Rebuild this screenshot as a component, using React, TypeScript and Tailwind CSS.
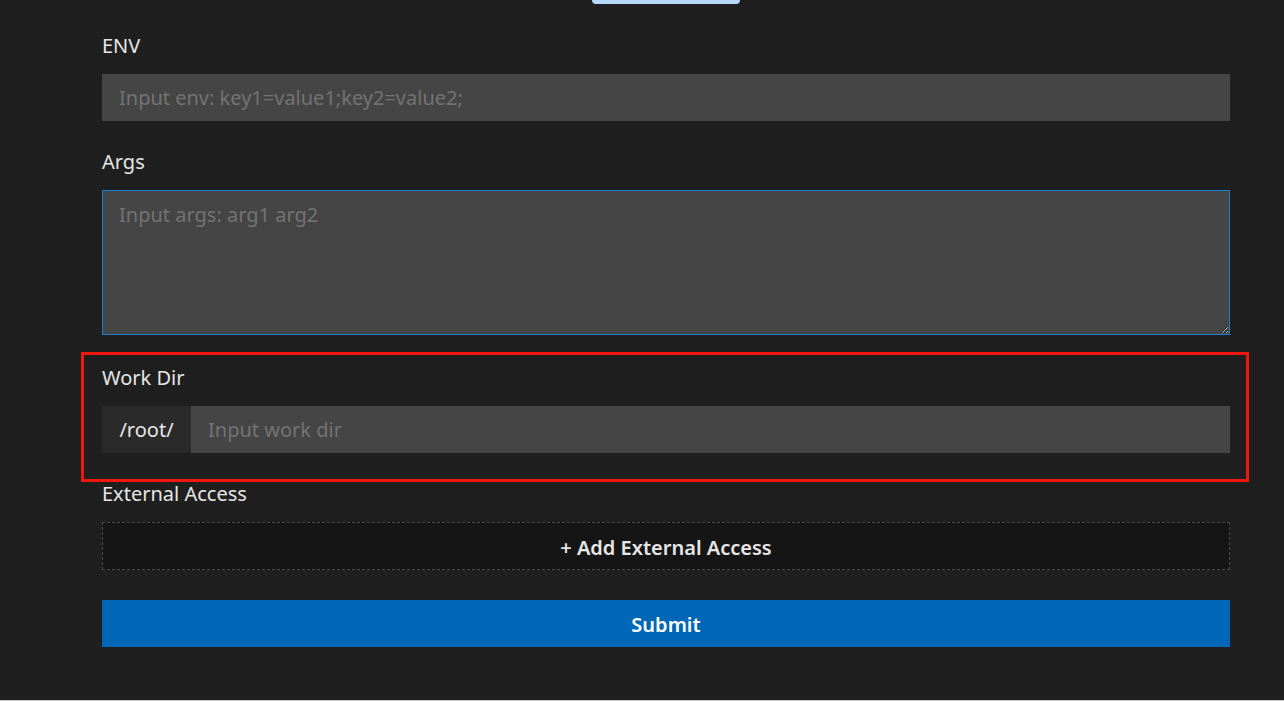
import { useState } from 'react'

const labelClass = 'block h-7 text-[20px] leading-7 text-[#e6e6e6]'
const fieldClass = 'h-[47px] w-full bg-[#454545] px-[17px] text-[20px] text-[#e6e6e6] placeholder:text-[#737373] outline-none'

export default function App() {
  const [env, setEnv] = useState('')
  const [args, setArgs] = useState('')
  const [workDir, setWorkDir] = useState('')

  return (
    <div className="relative h-[701px] w-full overflow-hidden bg-[#1f1f1f] font-['Noto_Sans','Open_Sans',sans-serif]">
      {/* bottom of the tab button scrolled out of view */}
      <div className="ml-[592px] h-[4px] w-[148px] rounded-b-[6px] bg-[#b7dafc]" />

      <form className="ml-[102px] flex w-[1128px] flex-col pt-[28px]" onSubmit={e => e.preventDefault()}>
        <label className={labelClass}>ENV</label>
        <input
          className={`mt-[14px] ${fieldClass}`}
          placeholder="Input env: key1=value1;key2=value2;"
          value={env}
          onChange={e => setEnv(e.target.value)}
        />

        <label className={`mt-[27px] ${labelClass}`}>Args</label>
        <textarea
          className="mt-[14px] block h-[145px] w-full resize-y border border-[#1a7fd4] bg-[#454545] px-[16px] py-[10px] text-[20px] leading-7 text-[#e6e6e6] outline-none placeholder:text-[#737373]"
          placeholder="Input args: arg1 arg2"
          value={args}
          onChange={e => setArgs(e.target.value)}
        />

        <label className={`mt-[29px] ${labelClass}`}>Work Dir</label>
        <div className="mt-[14px] flex h-[47px]">
          <span className="flex w-[89px] shrink-0 items-center justify-center bg-[#2a2a2a] text-[20px] text-[#e6e6e6]">/root/</span>
          <input
            className={`flex-1 ${fieldClass}`}
            placeholder="Input work dir"
            value={workDir}
            onChange={e => setWorkDir(e.target.value)}
          />
        </div>

        <label className={`mt-[27px] ${labelClass}`}>External Access</label>
        <button
          type="button"
          className="mt-[14px] flex h-[48px] w-full items-center justify-center border border-dashed border-[#4a4a4a] bg-[#151515] pt-[3px] text-[20px] font-semibold text-[#e6e6e6]"
        >
          + Add External Access
        </button>

        <button
          type="submit"
          className="mt-[30px] flex h-[47px] w-full items-center justify-center bg-[#0067b8] pt-[2px] text-[20px] font-semibold text-white"
        >
          Submit
        </button>
      </form>

      {/* highlight annotation */}
      <div className="pointer-events-none absolute left-[81px] top-[352px] h-[130px] w-[1168px] border-[3px] border-[#f0170f]" />
      <div className="absolute bottom-0 left-0 h-px w-full bg-[#c8c8c8]" />
    </div>
  )
}
